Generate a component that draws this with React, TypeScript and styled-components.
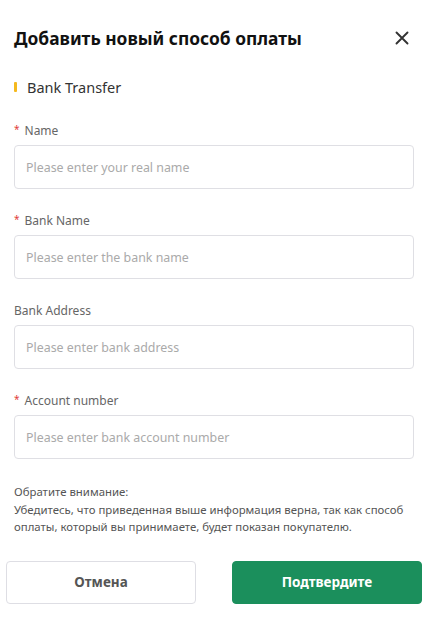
import { createGlobalStyle } from "styled-components";
import styled from "styled-components";

const GlobalStyle = createGlobalStyle`
  * { box-sizing: border-box; }
  body {
    margin: 0;
    background: #fff;
    font-family: "Noto Sans", "Open Sans", sans-serif;
    color: #222;
  }
`;

const Sheet = styled.div`
  width: 432px;
  height: 626px;
  padding: 26px 18px 0 14px;
  display: flex;
  flex-direction: column;
`;

const Header = styled.div`
  display: flex;
  align-items: center;
  justify-content: space-between;
  height: 24px;
`;

const Title = styled.h1`
  margin: 0;
  font-size: 17.4px;
  line-height: 24px;
  font-weight: 700;
  color: #111;
`;

const CloseButton = styled.button`
  border: 0;
  background: none;
  padding: 0;
  margin-right: 4px;
  width: 16px;
  height: 16px;
  display: flex;
  align-items: center;
  justify-content: center;
  cursor: pointer;
`;

const Section = styled.div`
  margin-top: 27px;
  display: flex;
  align-items: center;
  gap: 10px;
  height: 20px;
`;

const Marker = styled.span`
  width: 3px;
  height: 10px;
  background: #f5b91e;
  border-radius: 1px;
`;

const SectionName = styled.span`
  font-size: 14.5px;
  line-height: 20px;
  color: #333;
`;

const Form = styled.div`
  margin-top: 26px;
  display: flex;
  flex-direction: column;
  gap: 24px;
`;

const Field = styled.label`
  display: flex;
  flex-direction: column;
  gap: 6px;
`;

const Label = styled.span<{ $required?: boolean }>`
  display: flex;
  align-items: flex-start;
  font-size: 12px;
  line-height: 16px;
  color: #666;
  &::before {
    content: ${(p) => (p.$required ? '"*"' : "none")};
    color: #e0403a;
    font-size: 10px;
    line-height: 12px;
    margin-right: 5px;
  }
`;

const Input = styled.input`
  width: 400px;
  height: 44px;
  border: 1px solid #dfdfe4;
  border-radius: 4px;
  padding: 0 11px;
  font-family: inherit;
  font-size: 12.4px;
  color: #222;
  outline: none;
  &::placeholder {
    color: #aaa;
  }
`;

const Note = styled.p`
  margin: 24px 0 0;
  font-size: 11.4px;
  line-height: 17.5px;
  color: #555;
`;

const Footer = styled.div`
  margin: 25px -8px 0 -8px;
  display: flex;
  gap: 36px;
`;

const Action = styled.button<{ $primary?: boolean }>`
  flex: 0 0 190px;
  height: 43px;
  border-radius: 4px;
  font-family: inherit;
  font-size: 13.5px;
  font-weight: 700;
  cursor: pointer;
  border: 1px solid ${(p) => (p.$primary ? "#1b8f5c" : "#dedee4")};
  background: ${(p) => (p.$primary ? "#1b8f5c" : "#fff")};
  color: ${(p) => (p.$primary ? "#fff" : "#555")};
`;

const fields = [
  { label: "Name", placeholder: "Please enter your real name", required: true },
  { label: "Bank Name", placeholder: "Please enter the bank name", required: true },
  { label: "Bank Address", placeholder: "Please enter bank address", required: false },
  { label: "Account number", placeholder: "Please enter bank account number", required: true },
];

export default function App() {
  return (
    <>
      <GlobalStyle />
      <Sheet>
        <Header>
          <Title>Добавить новый способ оплаты</Title>
          <CloseButton aria-label="close">
            <svg width="14" height="14" viewBox="0 0 14 14">
              <path d="M1.5 1.5 L12.5 12.5 M12.5 1.5 L1.5 12.5" stroke="#333" strokeWidth="1.9" strokeLinecap="round" />
            </svg>
          </CloseButton>
        </Header>

        <Section>
          <Marker />
          <SectionName>Bank Transfer</SectionName>
        </Section>

        <Form>
          {fields.map((f) => (
            <Field key={f.label}>
              <Label $required={f.required}>{f.label}</Label>
              <Input placeholder={f.placeholder} />
            </Field>
          ))}
        </Form>

        <Note>
          Обратите внимание:
          <br />
          Убедитесь, что приведенная выше информация верна, так как способ оплаты, который вы принимаете, будет показан покупателю.
        </Note>

        <Footer>
          <Action>Отмена</Action>
          <Action $primary>Подтвердите</Action>
        </Footer>
      </Sheet>
    </>
  );
}
